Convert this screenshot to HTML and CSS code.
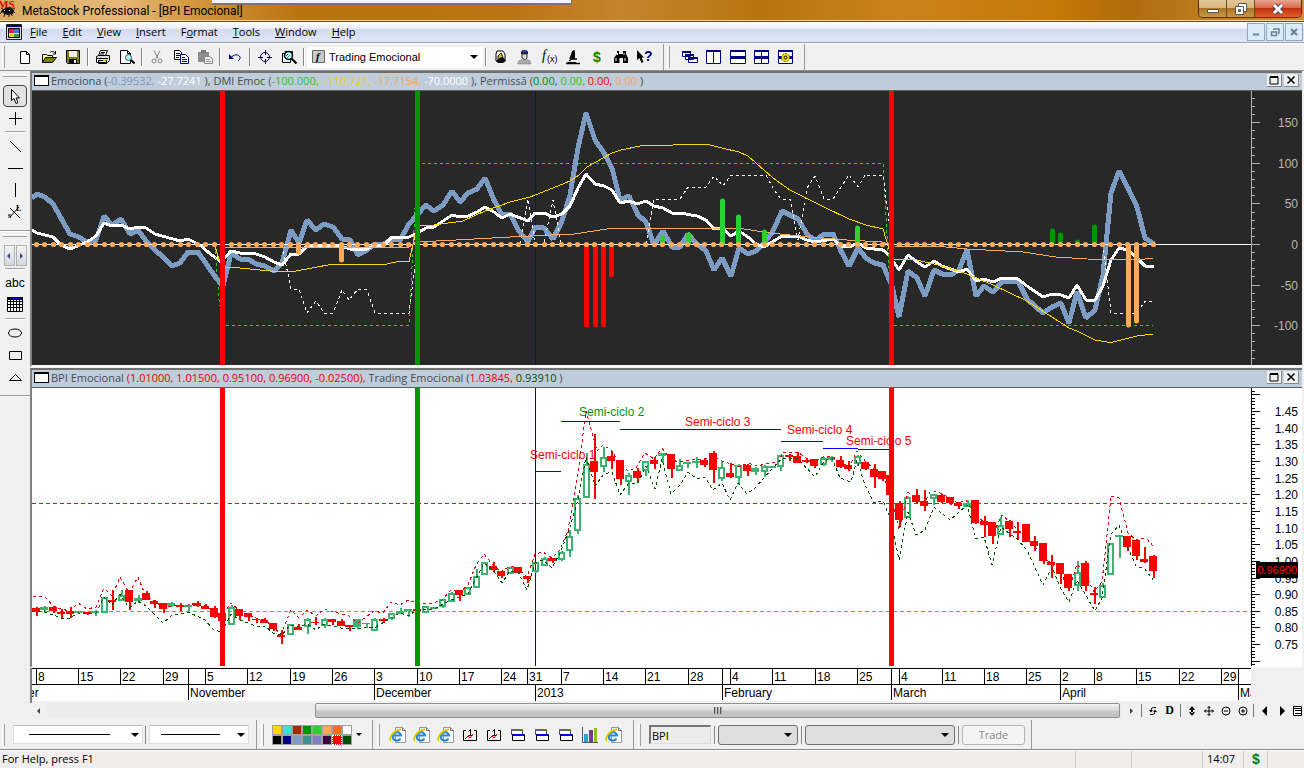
FILE: index.html
```html
<!DOCTYPE html>
<html lang="en">
<head>
  <meta charset="UTF-8">
  <meta name="viewport" content="width=device-width, initial-scale=1">
  <title>MetaStock Professional - [BPI Emocional]</title>
  <link rel="stylesheet" href="styles.css">
</head>
<body>
  <!-- shared icons -->
  <svg class="defs" aria-hidden="true">
    <symbol id="i-ie" viewBox="0 0 18 18"><path d="M6.500 1.500h7l3 3v12h-10z" fill="#fff" stroke="#999"/><path d="M13.500 1.500v3h3" fill="none" stroke="#777"/><path d="M11.500 12.500a4.200 4.200 0 1 1 .5-3H5" fill="none" stroke="#2389d8" stroke-width="2.200"/><path d="M2 15C-.5 14 3 4 12 3.500" fill="none" stroke="#e8c400" stroke-width="1.800"/></symbol>
    <symbol id="i-cal" viewBox="0 0 16 16"><path d="M4 3.500H1.500v10h13v-10H12" fill="none" stroke="#000"/><path d="M6.500 4.500l2-2v6M6.500 8.500h4" fill="none" stroke="#000"/><path d="M3 12l3-3 2 2 3-4" fill="none" stroke="#d00"/></symbol>
    <symbol id="i-stack" viewBox="0 0 16 16"><path d="M1.500 2.500h11v5h-11z" fill="#fff" stroke="#444"/><path d="M1 2h12v2H1z" fill="#666"/><path d="M2.500 7.500h12v6h-12z" fill="#fff" stroke="#000"/><path d="M3 7h11v2H3z" fill="#00f"/></symbol>
    <symbol id="i-max" viewBox="0 0 12 10"><path d="M2 2h8v7H2z" fill="none" stroke="#000"/><path d="M2 2h8" stroke="#000" stroke-width="2"/></symbol>
    <symbol id="i-x" viewBox="0 0 12 10"><path d="M2.500 1.500l7 7M9.500 1.500l-7 7" stroke="#000" stroke-width="1.500"/></symbol>
  </svg>

  <header class="titlebar">
    <svg class="app-icon" width="17" height="18"><text x="-2" y="8" class="ms">MS</text><path d="M1 11l4-3 5-1 4 3-1 4-6 1-4-2z" fill="#111"/><path d="M0 14l3-4M4 17l1-5M9 17v-4M12 16l-1-4M15 13l-3-3M1 8l3 2M15 8l-4 2" stroke="#111" fill="none"/><path d="M4 10h1v1H4zM9 10h1v1H9z" fill="#fff"/></svg>
    <h1>MetaStock Professional - [BPI Emocional]</h1>
    <div class="tab-edge"></div>
    <div class="win-buttons">
      <button aria-label="Minimize"><svg width="14" height="14"><path d="M1.500 7.500h11v3h-11z" fill="#fff" stroke="#555"/></svg></button>
      <button aria-label="Restore"><svg width="14" height="14"><path d="M4.500 1.500h8v8h-8z" fill="#fff" stroke="#555"/><path d="M1.500 4.500h8v8h-8z" fill="#fff" stroke="#555"/><path d="M4.500 7.500h2v2h-2z" fill="#b98b4a" stroke="#555"/></svg></button>
      <button class="close" aria-label="Close"><svg width="14" height="14"><path d="M3 3l8 8M11 3l-8 8" stroke="#445" stroke-width="5"/><path d="M3 3l8 8M11 3l-8 8" stroke="#fff" stroke-width="3"/></svg></button>
    </div>
  </header>

  <nav class="menubar">
    <svg class="doc-icon" width="16" height="16"><path d="M.5.5h15v15H.5z" fill="#ddd" stroke="#222"/><path d="M1 1h14v2H1z" fill="#000080"/><path d="M3 5h5v4H3z" fill="#e02050"/><path d="M8 5h5v4H8z" fill="#4070e0"/><path d="M3 10h5v3H3z" fill="#e8d020"/><path d="M8 10h5v3H8z" fill="#30a040"/><path d="M2.500 4.500h11v9h-11z" fill="none" stroke="#000"/></svg>
    <button><u>F</u>ile</button>
    <button><u>E</u>dit</button>
    <button><u>V</u>iew</button>
    <button><u>I</u>nsert</button>
    <button>F<u>o</u>rmat</button>
    <button><u>T</u>ools</button>
    <button><u>W</u>indow</button>
    <button><u>H</u>elp</button>
    <div class="mdi-buttons">
      <button aria-label="Minimize document"><svg width="12" height="12"><path d="M3 8.500h6" stroke="#6a7f95" stroke-width="2"/></svg></button>
      <button aria-label="Restore document"><svg width="12" height="12"><path d="M5 4V3h5v4H9M2.500 6h5v3.500h-5z" fill="none" stroke="#6a7f95" stroke-width="1.500"/></svg></button>
      <button aria-label="Close document"><svg width="12" height="12"><path d="M3 3l6 6M9 3L3 9" stroke="#6a7f95" stroke-width="2"/></svg></button>
    </div>
  </nav>

  <div class="toolbar">
    <span class="grip"></span>
    <button class="tool" aria-label="New"><svg width="16" height="16"><path d="M3.500 2.500h6l3 3v9h-9z" fill="#fff" stroke="#000"/><path d="M9.500 2.500v3h3" fill="none" stroke="#000"/></svg></button>
    <button class="tool" aria-label="Open"><svg width="16" height="16"><path d="M1.500 13V5.500h4l1 1h5V9" fill="#ffff80" stroke="#000"/><path d="M1.500 13.500l3-5h11l-4 5z" fill="#808000" stroke="#000"/><path d="M9 3.500c2-2 4-1 5 1M14.500 2v3H12" fill="none" stroke="#000"/></svg></button>
    <button class="tool" aria-label="Save"><svg width="16" height="16"><path d="M1.500 1.500h13v13h-12l-1-1z" fill="#808000" stroke="#000"/><path d="M4 2h8v6H4z" fill="#eee"/><path d="M4 10h8v4H4z" fill="#000"/><path d="M9 11h2v3H9z" fill="#fff"/></svg></button>
    <span class="sep"></span>
    <button class="tool" aria-label="Print"><svg width="16" height="16"><path d="M5.500 1.500h7l-2 5h-7z" fill="#fff" stroke="#000"/><path d="M1.500 7.500l2-1h11v5l-2 2h-11z" fill="#ddd" stroke="#000"/><path d="M2 9.500h11M3.500 11.500h8v3h-8zM6 3.500h4M5 5h4" fill="none" stroke="#000"/><path d="M8 11h3v1H8z" fill="#d0d000"/></svg></button>
    <button class="tool" aria-label="Print preview"><svg width="16" height="16"><path d="M1.500 1.500h7l3 3v10h-10z" fill="#fff" stroke="#000"/><path d="M8.500 1.500v3h3" fill="none" stroke="#000"/><circle cx="9.500" cy="8.500" r="3" fill="#9ff" stroke="#444"/><path d="M12 11l3.500 3.500" stroke="#000" stroke-width="2"/></svg></button>
    <span class="sep"></span>
    <button class="tool" aria-label="Cut" disabled><svg width="16" height="16"><path d="M5 1.500l4 8M11 1.500l-4 8" stroke="#888" fill="none"/><circle cx="5" cy="12" r="2" fill="none" stroke="#888"/><circle cx="11" cy="12" r="2" fill="none" stroke="#888"/></svg></button>
    <button class="tool" aria-label="Copy"><svg width="16" height="16"><path d="M1.500 1.500h5l2 2v7h-7z" fill="#fff" stroke="#000"/><path d="M3 4.500h4M3 6.500h4M3 8.500h3" stroke="#000"/><path d="M7.500 5.500h5l3 3v6h-8z" fill="#fff" stroke="#000080"/><path d="M9 8.500h3M9 10.500h5M9 12.500h5" stroke="#000080"/></svg></button>
    <button class="tool" aria-label="Paste" disabled><svg width="16" height="16"><path d="M1 3h11v10H1z" fill="#8c8c8c"/><path d="M4 1h5v3H4z" fill="#777"/><path d="M7.500 7.500h5l3 2v5h-8z" fill="#eee" stroke="#888"/><path d="M9 10.500h4M9 12.500h5" stroke="#999"/></svg></button>
    <span class="sep"></span>
    <button class="tool" aria-label="Undo"><svg width="16" height="16"><path d="M4 9c2-4 8-4 9-1 .5 2-1 3-2 4" fill="none" stroke="#000080"/><path d="M2 5v5h5z" fill="#000080"/></svg></button>
    <span class="sep"></span>
    <button class="tool" aria-label="Crosshair"><svg width="16" height="16"><circle cx="8" cy="8" r="4.500" fill="none" stroke="#000080"/><path d="M8.500 1v5M8.500 10v5M1 8.500h5M10 8.500h5" stroke="#000"/></svg></button>
    <button class="tool" aria-label="Zoom in chart"><svg width="16" height="16"><path d="M1.500 4.500h8v9h-8z" fill="#fff" stroke="#000"/><path d="M3.500 2.500h8v4" fill="none" stroke="#000"/><circle cx="7.500" cy="6.500" r="4" fill="#bff" stroke="#000" stroke-width="1.500"/><path d="M5 7l2-2M6 9l3-3" stroke="#088"/><path d="M10.500 9.500l5 5" stroke="#000" stroke-width="2"/></svg></button>
    <span class="sep"></span>
    <label class="combo">
      <svg width="14" height="14"><path d="M.5.500h12v12H.5z" fill="#c8c8c8" stroke="#666"/><text x="4" y="10" class="fn">f</text></svg>
      <select aria-label="Template"><option>Trading Emocional</option></select>
    </label>
    <span class="sep"></span>
    <button class="tool" aria-label="Expert"><svg width="16" height="16"><path d="M4 2h6l2 3v7H3V5z" fill="#fff" stroke="#000"/><path d="M5 7l3-3 2 4-2 4H5z" fill="#d8c820" stroke="#000"/><path d="M3 12l5-4 3 1 2 3-3 2H5z" fill="#111"/></svg></button>
    <button class="tool" aria-label="Expert advisor"><svg width="16" height="16"><path d="M4 3c1-3 6-3 7 0v2H4z" fill="#223"/><path d="M6 1h3v2H6z" fill="#25d"/><path d="M5 5h5v4l-2 2-3-2z" fill="#ddd" stroke="#333"/><path d="M1 15c0-4 3-5 6-4 4-1 7 0 7 4z" fill="#aaa" stroke="#777" stroke-dasharray="1 1"/></svg></button>
    <button class="tool" aria-label="Indicator builder"><svg width="18" height="18"><text x="2" y="12" class="fx">f</text><text x="7" y="14" class="fx2">(x)</text></svg></button>
    <button class="tool" aria-label="Explorer"><svg width="16" height="16"><path d="M9 1v8M8 2l-3 8M1 14.500h14M4 12l3-2h5" stroke="#000" stroke-width="1.500" fill="none"/><path d="M7 3h3v7H6zM2 13h9v2H2z" fill="#000"/></svg></button>
    <button class="tool money" aria-label="System tester">$</button>
    <button class="tool" aria-label="Find security"><svg width="16" height="16"><path d="M4 2h2v3h4V2h3v3l2 4v5h-5V9H6.500v5H1V9l3-4z" fill="#000"/><path d="M3 9v3M12 9v3M4.500 4v2M11 4v2" stroke="#fff"/></svg></button>
    <button class="tool" aria-label="Context help"><svg width="18" height="18"><path d="M1 2v10l2.500-2 2 5 2-1-2-4.500H8z" fill="#000"/><text x="8" y="13" class="help">?</text></svg></button>
    <div class="group">
      <span class="grip"></span>
      <button class="tool" aria-label="Cascade"><svg width="16" height="16"><path d="M.5 2.500h8v5h-8zM3.500 5.500h8v5h-8zM6.500 8.500h9v5h-9z" fill="#fff" stroke="#000080"/><path d="M0 2h9v2H0zM3 5h9v2H3zM6 8h10v2H6z" fill="#000080"/></svg></button>
      <button class="tool" aria-label="Tile columns"><svg width="16" height="16"><path d="M.5 1.500h14v13H.500zM7.500 1v14" fill="#fff" stroke="#000080"/><path d="M0 1h15v2H0z" fill="#000080"/></svg></button>
      <button class="tool" aria-label="Tile rows"><svg width="16" height="16"><path d="M.5 1.500h15v13H.5z" fill="#fff" stroke="#000080"/><path d="M0 1h16v2H0zM0 7h16v3H0z" fill="#000080"/></svg></button>
      <button class="tool" aria-label="Tile grid"><svg width="16" height="16"><path d="M.5 1.500h14v13H.500zM7.500 1v14" fill="#fff" stroke="#000080"/><path d="M0 1h15v2H0zM0 7h15v3H0z" fill="#000080"/></svg></button>
      <button class="tool" aria-label="Layout options"><svg width="16" height="16"><path d="M.5 1.500h14v13H.500z" fill="#fff" stroke="#000080"/><path d="M0 1h15v2H0zM0 7h15v3H0z" fill="#000080"/><circle cx="7.500" cy="8.500" r="4" fill="#ffe600" stroke="#554400" stroke-dasharray="2 1"/><circle cx="7.500" cy="8.500" r="1.500" fill="none" stroke="#000"/></svg></button>
    </div>
  </div>

  <main class="workspace">
    <aside class="palette">
      <div class="palette-group">
        <span class="hgrip"></span>
        <button class="draw active" aria-label="Pointer"><svg width="14" height="18"><path d="M3.500 2.500v11l2.500-2 2 5 2-1-2-4.500h3.500z" fill="#fff" stroke="#000"/></svg></button>
        <button class="draw" aria-label="Cross"><svg width="14" height="14"><path d="M7.500 1v13M1 7.500h13" stroke="#000"/></svg></button>
        <span class="hsep"></span>
        <button class="draw" aria-label="Trendline"><svg width="14" height="14"><path d="M2 2l11 11" stroke="#000"/></svg></button>
        <button class="draw" aria-label="Horizontal line"><svg width="16" height="14"><path d="M1 7.500h15" stroke="#000"/></svg></button>
        <button class="draw" aria-label="Vertical line"><svg width="14" height="14"><path d="M7.500 0v14" stroke="#000"/></svg></button>
        <button class="draw" aria-label="Speed lines"><svg width="16" height="16"><path d="M3 4l10 10M3 13L12 3" stroke="#000"/><text x="1" y="14" class="sl">s</text><text x="9" y="7" class="sl">L</text></svg></button>
      </div>
      <div class="palette-group second">
        <span class="hgrip"></span>
        <div class="nav-pair"><button aria-label="Previous"><svg width="8" height="8"><path d="M5 1v6L2 4z" fill="#2b4a9b"/></svg></button><button aria-label="Next"><svg width="8" height="8"><path d="M3 1v6l3-3z" fill="#2b4a9b"/></svg></button></div>
        <span class="hsep"></span>
        <button class="draw abc">abc</button>
        <button class="draw" aria-label="Grid"><svg width="16" height="16"><path d="M.5 1.500h15v13H.5zM0 4.500h16M0 7.500h16M0 10.500h16M3.500 3v12M6.500 3v12M9.500 3v12M12.500 3v12" fill="#fff" stroke="#000"/><path d="M0 0h16v3H0z" fill="#000"/><path d="M4 1h11v1H4z" fill="#00b"/></svg></button>
        <span class="hsep"></span>
        <button class="draw" aria-label="Ellipse"><svg width="14" height="14"><ellipse cx="7" cy="7" rx="6.500" ry="4" fill="none" stroke="#000"/></svg></button>
        <button class="draw" aria-label="Rectangle"><svg width="14" height="14"><path d="M1.500 3.500h12v8h-12z" fill="none" stroke="#000"/></svg></button>
        <button class="draw" aria-label="Triangle"><svg width="14" height="14"><path d="M1.500 10.500h12l-6-6z" fill="none" stroke="#000"/></svg></button>
      </div>
    </aside>

    <section class="charts">
      <article class="pane pane-osc">
        <header class="caption">
          <span class="win-glyph"></span>
          <p>Emociona (<b class="c-blue">-0.39532,</b> <b class="c-white">-27.7241</b> ), DMI Emoc (<b class="c-lime">-100.000,</b>&nbsp; <b class="c-gold">-110.721,</b> <b class="c-orange">-17.7154,</b> <b class="c-white">-70.0000</b> ), Permissã (<b class="c-green">0.00,</b> <b class="c-lime">0.00,</b> <b class="c-red">0.00,</b> <b class="c-orange">0.00</b> )</p>
          <button aria-label="Maximize pane"><svg width="12" height="10"><use href="#i-max"/></svg></button>
          <button aria-label="Close pane"><svg width="12" height="10"><use href="#i-x"/></svg></button>
        </header>
        <div class="plot-row dark">
          <svg class="plot"><g id="osc" transform="translate(-32 -91)"></g></svg>
          <svg class="scale"><g id="osc-scale" transform="translate(-1251 -91)"></g></svg>
        </div>
      </article>

      <article class="pane pane-price">
        <header class="caption">
          <span class="win-glyph"></span>
          <p>BPI Emocional <b class="c-red">(1.01000, 1.01500, 0.95100, 0.96900, -0.02500)</b>, Trading Emocional (<b class="c-red">1.03845,</b> <b class="c-dark">0.93910</b> )</p>
          <button aria-label="Maximize pane"><svg width="12" height="10"><use href="#i-max"/></svg></button>
          <button aria-label="Close pane"><svg width="12" height="10"><use href="#i-x"/></svg></button>
        </header>
        <div class="plot-row">
          <svg class="plot"><g id="price" transform="translate(-32 -388)"></g></svg>
          <svg class="scale"><g id="price-scale" transform="translate(-1251 -388)"></g></svg>
        </div>
      </article>

      <div class="time-row"><svg class="time-axis"><g id="time" transform="translate(-32 -668)"></g></svg></div>

      <div class="scroll-row">
        <button class="arrow" aria-label="Scroll left"><svg width="8" height="8"><path d="M5 1v6L2 4z" fill="#444"/></svg></button>
        <div class="track"><div class="thumb"><i></i><i></i><i></i></div></div>
        <button class="arrow" aria-label="Scroll right"><svg width="8" height="8"><path d="M3 1v6l3-3z" fill="#444"/></svg></button>
        <span class="vsep"></span>
        <button class="mini" aria-label="Refresh"><svg width="10" height="12"><path d="M8 2.500H5.500Q3 2.500 3 5.500M2 9.500h2.500Q7 9.500 7 6.500" fill="none" stroke="#000"/><path d="M1 5h4L3 7.500zM5 7h4L7 4.500z"/></svg></button>
        <button class="mini periodicity">D</button>
        <span class="vsep"></span>
        <button class="mini" aria-label="Scale vertically"><svg width="10" height="12"><path d="M5 1l3 4H2zM5 11l3-4H2zM4 4h2v4H4z"/></svg></button>
        <button class="mini" aria-label="Move"><svg width="10" height="12"><path d="M5 1.500v9M.5 6h9M3.500 3L5 1.500 6.500 3M3.500 9L5 10.500 6.500 9M2 4.500L.5 6 2 7.500M8 4.500L9.500 6 8 7.500" fill="none" stroke="#000"/></svg></button>
        <button class="mini" aria-label="Zoom out"><svg width="10" height="12"><circle cx="5" cy="6" r="4" fill="none" stroke="#000"/><path d="M3 6h4" stroke="#000"/></svg></button>
        <button class="mini" aria-label="Zoom in"><svg width="10" height="12"><circle cx="5" cy="6" r="4" fill="none" stroke="#000"/><path d="M3 6h4M5 4v4" stroke="#000"/></svg></button>
        <span class="vsep"></span>
        <button class="mini" aria-label="Previous chart"><svg width="10" height="12"><path d="M7 1v10L2 6z"/></svg></button>
        <button class="mini" aria-label="Next chart"><svg width="10" height="12"><path d="M3 1v10l5-5z"/></svg></button>
        <button class="mini last" aria-label="Chart list"><svg width="10" height="12"><path d="M1.500 1.500h8v9h-8zM1 3.500h9M3 5.500h6M3 8.500h6" fill="#fff" stroke="#000"/></svg></button>
      </div>
    </section>
  </main>

  <footer class="bottombar">
    <span class="grip"></span>
    <select class="line-combo style" aria-label="Line style"><option></option></select>
    <span class="bsep"></span>
    <select class="line-combo weight" aria-label="Line weight"><option></option></select>
    <div class="group swatch-group">
      <span class="grip"></span>
      <div class="swatches" id="swatches"></div>
      <button class="drop" aria-label="More colours"><svg width="8" height="6"><path d="M1 1h6L4 4z"/></svg></button>
    </div>
    <div class="group links">
      <span class="grip"></span>
      <button class="tool" aria-label="Web page 1"><svg width="18" height="18"><use href="#i-ie"/></svg></button>
      <button class="tool" aria-label="Web page 2"><svg width="18" height="18"><use href="#i-ie"/></svg></button>
      <button class="tool" aria-label="Web page 3"><svg width="18" height="18"><use href="#i-ie"/></svg></button>
      <button class="tool" aria-label="Chart 1"><svg width="16" height="16"><use href="#i-cal"/></svg></button>
      <button class="tool" aria-label="Chart 2"><svg width="16" height="16"><use href="#i-cal"/></svg></button>
      <button class="tool" aria-label="Layout 1"><svg width="16" height="16"><use href="#i-stack"/></svg></button>
      <button class="tool" aria-label="Layout 2"><svg width="16" height="16"><use href="#i-stack"/></svg></button>
      <button class="tool" aria-label="Layout 3"><svg width="16" height="16"><use href="#i-stack"/></svg></button>
      <button class="tool" aria-label="Statistics"><svg width="18" height="18"><path d="M1.500 1v15.500H17" fill="none" stroke="#555"/><path d="M3 8h4v8H3z" fill="#2aa0e0"/><path d="M8 4h4v12H8z" fill="#704090"/><path d="M13 2h3v14h-3z" fill="#90c020"/></svg></button>
      <button class="tool" aria-label="Web page 4"><svg width="18" height="18"><use href="#i-ie"/></svg></button>
    </div>
    <div class="group trade">
      <span class="grip"></span>
      <input type="text" value="BPI" aria-label="Symbol">
      <span class="bsep"></span>
      <select class="flat short" aria-label="Account"><option></option></select>
      <span class="bsep"></span>
      <select class="flat long" aria-label="Order type"><option></option></select>
      <span class="bsep"></span>
      <button class="trade-btn" disabled>Trade</button>
    </div>
  </footer>

  <div class="statusbar">
    <span class="hint">For Help, press F1</span>
    <span class="cell w56"></span>
    <span class="cell w71"></span>
    <span class="cell w41">14:07</span>
    <span class="cell w24 money">$</span>
    <span class="cell w37"></span>
  </div>
  <script src="chart.js"></script>
</body>
</html>
```
FILE: styles.css
```css
* {
  box-sizing: border-box;
}

body {
  margin: 0;
  height: 100vh;
  display: flex;
  flex-direction: column;
  overflow: hidden;
  background: #f0f0f0;
  color: #000;
  font-family: "Open Sans", "Noto Sans", sans-serif;
  font-size: 11px;
  line-height: 16px;
}

button,
select,
input {
  font: inherit;
  color: inherit;
  margin: 0;
  padding: 0;
  border: 0;
  background: none;
  border-radius: 0;
}

button {
  display: flex;
  align-items: center;
  justify-content: center;
}

svg {
  display: block;
  flex: none;
}

.defs {
  position: absolute;
  width: 0;
  height: 0;
}

/* title bar */
.titlebar {
  position: relative;
  flex: none;
  display: flex;
  height: 22px;
  border-bottom: 1px solid #6b4a1c;
  background: linear-gradient(90deg, #d9ac62 0, #e6b878 120px, #cf8f35 210px, #b8740f 300px, #bb7514 520px, #c5842c 620px, #b8740f 760px, #c9821c 900px, #c47806 1060px, #b06c0c 1130px, #d09038 1304px);
  box-shadow: inset 0 -1px #f3d39b;
}

.titlebar h1 {
  margin: 3px 0 0 5px;
  font-family: Roboto, sans-serif;
  font-size: 12px;
  font-weight: 400;
}

.app-icon {
  overflow: visible;
}

.ms {
  font: bold 11px "Liberation Serif", serif;
  fill: #d00;
}

.tab-edge {
  position: absolute;
  left: 212px;
  top: 0;
  width: 360px;
  height: 5px;
  background: #f4f4f4;
  border: solid #777;
  border-width: 0 1px 2px 0;
}

.win-buttons {
  display: flex;
  height: 18px;
  margin: 0 2px 0 auto;
  border: 1px solid #4a3210;
  border-top: 0;
  border-radius: 0 0 5px 5px;
  overflow: hidden;
}

.win-buttons button {
  width: 28px;
  background: linear-gradient(#e3c79a, #d9b67c 45%, #ad7526 50%, #c99748);
  border-right: 1px solid #6b4a1c;
}

.win-buttons .close {
  width: 46px;
  border: 0;
  background: linear-gradient(#e8a590, #d9694c 45%, #c02f10 50%, #e0602c);
}

/* menu bar */
.menubar {
  flex: none;
  display: flex;
  align-items: center;
  gap: 1px;
  height: 21px;
  padding-left: 6px;
  background: linear-gradient(#fff, #eceffa 32%, #d5dbef 36%, #e1e6f6);
  border-bottom: 1px solid #a0a0a8;
}

.menubar > button {
  padding: 0 7px;
}

.mdi-buttons {
  display: flex;
  gap: 1px;
  margin: 0 1px 0 auto;
}

.mdi-buttons button {
  width: 18px;
  height: 18px;
  background: #dcebf8;
  border: 1px solid #90a4ba;
}

/* toolbars */
.toolbar {
  flex: none;
  display: flex;
  align-items: center;
  height: 28px;
  background: #f0f0f0;
  border-top: 1px solid #fff;
  border-bottom: 1px solid #909090;
}

.grip {
  width: 3px;
  height: 22px;
  margin: 0 8px 0 2px;
  flex: none;
  border-left: 1px solid #fff;
  border-right: 1px solid #a0a0a0;
}

.tool {
  width: 24px;
  height: 24px;
  flex: none;
}

.sep {
  width: 6px;
  height: 18px;
  flex: none;
  background: linear-gradient(90deg, transparent 2px, #888 2px, #888 3px, #fff 3px, #fff 4px, transparent 4px);
}

.combo {
  display: flex;
  align-items: center;
  width: 176px;
  height: 21px;
  padding-left: 5px;
  background: #fff;
}

.combo select,
.line-combo,
.flat {
  appearance: none;
  background: url("data:image/svg+xml,%3Csvg xmlns='http://www.w3.org/2000/svg' width='8' height='4'%3E%3Cpath d='M0 0h8L4 4z'/%3E%3C/svg%3E") right 5px center no-repeat;
}

.combo select {
  flex: 1;
  padding-left: 3px;
  height: 20px;
  font: 11px "Liberation Sans", Arial, sans-serif;
}

.group {
  display: flex;
  align-items: center;
  height: 100%;
  margin-left: 6px;
  padding-right: 6px;
  border-left: 1px solid #999;
  border-right: 1px solid #999;
}

.toolbar .group .grip {
  margin: 0 8px 0 3px;
}

.money {
  color: #008000;
  font: bold 14px "Liberation Sans", sans-serif;
}

.fn {
  font: italic bold 11px "Liberation Serif", serif;
}

.fx {
  font: italic 14px "Liberation Serif", serif;
}

.fx2 {
  font: 9px "Liberation Sans", sans-serif;
}

.help {
  font: bold 14px "Liberation Sans", sans-serif;
  fill: #000080;
}

/* drawing palette */
.workspace {
  flex: 1;
  min-height: 0;
  display: flex;
}

.palette {
  width: 30px;
  flex: none;
}

.palette-group {
  display: flex;
  flex-direction: column;
  align-items: center;
  padding-bottom: 7px;
  border-bottom: 1px solid #999;
  box-shadow: 0 1px #fff;
}

.hgrip {
  width: 24px;
  height: 3px;
  margin: 3px 0 8px;
  border-top: 1px solid #fff;
  border-bottom: 1px solid #a0a0a0;
}

.hsep {
  width: 20px;
  height: 2px;
  margin: 2px 0;
  background: #a0a0a0;
  border-bottom: 1px solid #fff;
}

.draw {
  width: 26px;
  height: 22px;
}

.draw.active {
  width: 24px;
  border: 1px solid #444;
  border-radius: 4px;
  background: #e2e2e2;
}

.draw.abc {
  font: 12px "Liberation Sans", Arial, sans-serif;
}

.sl {
  font: bold 8px "Liberation Serif", serif;
}

.nav-pair {
  display: flex;
  gap: 1px;
}

.nav-pair button {
  width: 11px;
  height: 21px;
  border: 1px solid #b0b0b0;
  background: linear-gradient(#f4f4f4, #d8d8d8);
}

/* chart panes */
.charts {
  flex: 1;
  min-width: 0;
  display: flex;
  flex-direction: column;
}

.pane {
  display: flex;
  flex-direction: column;
  min-height: 0;
  margin-right: 2px;
  border-top: 2px solid #707070;
  border-left: 2px solid #808080;
  border-bottom: 2px solid #fafafa;
}

.pane-osc {
  flex: 296 1 0;
}

.pane-price {
  flex: 300 1 0;
  margin-top: 1px;
}

.caption {
  flex: none;
  display: flex;
  align-items: center;
  height: 18px;
  padding: 0 3px 2px 2px;
  background: #bfccd9;
  border-bottom: 1px solid #606060;
  color: #444c55;
}

.caption p {
  flex: 1;
  margin: 0;
  overflow: hidden;
  white-space: nowrap;
}

.caption b {
  font-weight: 400;
}

.caption button {
  width: 15px;
  height: 13px;
  margin-left: 2px;
  background: #f0f0f0;
  border: solid #888;
  border-width: 0 1px 1px 0;
}

.win-glyph {
  width: 15px;
  height: 11px;
  margin-right: 2px;
  background: #fff;
  border: 1px solid #000;
  border-top-width: 2px;
}

.c-blue { color: #7b9cc4; }
.c-white { color: #fff; }
.c-lime { color: #2fc22f; }
.c-gold { color: #f2cf10; }
.c-orange { color: #fba65a; }
.c-green { color: #009000; }
.c-red { color: #f00000; }
.c-dark { color: #005000; }

.plot-row {
  flex: 1;
  min-height: 0;
  display: flex;
  background: #fff;
}

.plot-row.dark {
  background: #282828;
}

.plot {
  flex: 1;
  min-width: 0;
  height: 100%;
}

.scale {
  width: 51px;
  height: 100%;
}

.plot-row text,
.time-axis text {
  font: 12px "Liberation Sans", Arial, sans-serif;
}

.scale text {
  text-anchor: end;
}

.dark .scale text {
  fill: #b8b8b8;
}

.scale .last-price {
  fill: #f00;
  font-size: 11px;
}

.series {
  fill: none;
  stroke-linejoin: bevel;
}

.time-row {
  flex: none;
  height: 35px;
  padding-right: 53px;
  border-left: 2px solid #808080;
}

.time-axis {
  width: 100%;
  height: 33px;
  background: #fff;
}

/* scrollbar */
.scroll-row {
  flex: none;
  display: flex;
  align-items: center;
  height: 17px;
  padding-bottom: 2px;
  overflow: hidden;
}

.arrow {
  width: 17px;
  height: 15px;
  flex: none;
}

.track {
  flex: 1;
  height: 15px;
  display: flex;
  padding-right: 2px;
  background: #ececec;
}

.thumb {
  flex: none;
  width: 75%;
  margin-left: auto;
  display: flex;
  align-items: center;
  justify-content: center;
  gap: 1px;
  border: 1px solid #909090;
  border-radius: 2px;
  background: linear-gradient(#f2f2f2, #dcdcdc 45%, #c6c6ca 55%, #c2c2c4);
}

.thumb i {
  width: 2px;
  height: 7px;
  border-left: 1px solid #555;
  border-right: 1px solid #aaa;
}

.vsep {
  width: 1px;
  height: 13px;
  margin: 0 2px;
  flex: none;
  background: #777;
}

.mini {
  width: 17px;
  height: 15px;
  flex: none;
}

.mini.last {
  width: 14px;
}

.periodicity {
  font: bold 12px "Liberation Serif", serif;
}

/* bottom toolbar */
.bottombar {
  flex: none;
  display: flex;
  align-items: center;
  height: 30px;
  border-bottom: 1px solid #888;
}

.line-combo {
  height: 19px;
  background-color: #fff;
  border: 1px solid #e0e0e0;
  border-top-color: #bbb;
  background-image: url("data:image/svg+xml,%3Csvg xmlns='http://www.w3.org/2000/svg' width='8' height='4'%3E%3Cpath d='M0 0h8L4 4z'/%3E%3C/svg%3E"), linear-gradient(#000, #000);
  background-repeat: no-repeat;
}

.line-combo.style {
  width: 130px;
  background-position: right 3px center, 15px center;
  background-size: 8px 4px, 81px 1px;
}

.line-combo.weight {
  width: 100px;
  background-position: right 3px center, 11px center;
  background-size: 8px 4px, 59px 1px;
}

.bsep {
  width: 1px;
  height: 18px;
  margin: 0 3px 0 2px;
  flex: none;
  background: #888;
}

.bottombar .group {
  border-left: 0;
}

.bottombar .group .grip {
  margin: 0 6px 0 0;
}

.bottombar .swatch-group {
  width: 117px;
  margin-left: 7px;
  border-left: 1px solid #999;
}

.bottombar .swatch-group .grip {
  margin: 0 8px 0 4px;
}

.swatches {
  display: grid;
  grid-template-columns: repeat(8, 10px);
  grid-auto-rows: 10px;
}

.swatches button {
  border: 1px solid #a0a0a0;
}

.swatches .picked {
  border: 1px dotted #fff;
}

.drop {
  width: 14px;
  height: 18px;
}

.links {
  width: 257px;
}

.bottombar .links,
.bottombar .trade {
  margin-left: 4px;
}

.bottombar .trade .grip {
  margin-right: 8px;
}

.trade input {
  width: 62px;
  height: 19px;
  padding-left: 1px;
  border: solid #777;
  border-width: 2px 1px 1px 2px;
  border-right-color: #ddd;
  border-bottom-color: #ddd;
  background: #ececec;
}

.trade .bsep {
  margin-left: 3px;
}

.flat {
  height: 20px;
  border: 1px solid #707070;
  border-radius: 3px;
  background-color: #dedede;
}

.short {
  width: 80px;
}

.long {
  width: 150px;
}

.trade-btn {
  width: 63px;
  height: 20px;
  border: 1px solid #b4b4b4;
  border-radius: 3px;
  background: #f4f4f4;
  color: #888;
}

/* status bar */
.statusbar {
  flex: none;
  display: flex;
  height: 18px;
  background: #f1eded;
  border-top: 1px solid #fff;
}

.hint {
  flex: 1;
  padding-left: 2px;
}

.cell {
  padding-left: 4px;
  border-left: 1px solid #d0cccc;
}

.statusbar .money {
  padding-left: 8px;
}

.w56 { width: 56px; }
.w71 { width: 71px; }
.w41 { width: 41px; }
.w24 { width: 24px; }
.w37 { width: 37px; }
```
FILE: chart.js
```js
const NS = 'http://www.w3.org/2000/svg';

function add(parent, tag, attrs, text) {
  const el = document.createElementNS(NS, tag);
  for (const key in attrs) el.setAttribute(key, attrs[key]);
  if (text !== undefined) el.textContent = text;
  parent.appendChild(el);
  return el;
}

function line(parent, points, color, width, dash) {
  const attrs = { points: points, stroke: color, 'stroke-width': width, class: 'series' };
  if (dash) attrs['stroke-dasharray'] = dash;
  attrs['shape-rendering'] = 'crispEdges';
  return add(parent, 'polyline', attrs);
}

function rect(parent, x, y, w, h, fill) {
  return add(parent, 'rect', { x: x, y: y, width: w, height: h, fill: fill, 'shape-rendering': 'crispEdges' });
}

const barX = i => Math.round(36 + 8.46 * i);

// vertical markers shared by both panes
function markers(g, top, height) {
  rect(g, 220, top, 5, height, '#ff0000');
  rect(g, 415, top, 5, height, '#009600');
  rect(g, 889, top, 5, height, '#ff0000');
}

/* ---------- oscillator pane ---------- */
const osc = document.getElementById('osc');
rect(osc, 535, 91, 1, 1000, '#0000d0');

const blue = '32,198 37,194 45,197 53,204 70,234 79,237 87,242 96,240 104,216 112,225 121,219 130,234 138,230 146,241 172,266 180,263 188,252 198,252 216,278 223,286 231,253 240,259 248,259 256,264 265,266 274,271 282,263 291,230 299,243 307,220 316,230 324,224 333,227 342,239 350,240 358,255 367,250 375,244 384,244 392,239 400,240 409,224 417,215 426,205 434,211 443,205 452,191 460,202 468,193 477,189 485,178 494,200 502,215 510,214 519,231 528,242 535,227 544,228 553,239 562,221 570,195 578,148 586,113 595,140 604,153 612,168 620,200 629,196 638,215 646,222 654,245 663,231 672,247 680,247 688,234 697,244 706,251 714,270 722,258 731,276 739,248 748,254 756,251 764,243 773,231 782,211 790,215 798,219 807,234 815,241 824,234 833,234 841,251 849,266 858,248 866,258 874,263 883,265 892,286 899,317 908,271 917,278 925,296 934,270 942,274 951,275 959,270 967,250 976,296 984,286 993,292 1002,282 1010,281 1018,281 1027,299 1043,313 1052,307 1061,303 1069,323 1077,292 1086,318 1095,310 1103,275 1111,193 1119,171 1128,188 1137,207 1145,238 1154,244';
line(osc, blue, '#7c9cc4', 5);

line(osc, '32,244.500 1251,244.500', '#ffffff', 1);
line(osc, '32,230 37,233 53,237 61,245 70,249 87,242 96,236 104,223 112,226 121,225 130,229 138,227 146,228 155,234 180,241 188,239 200,245 208,252 221,262 231,251 240,253 256,254 265,257 274,262 282,265 291,254 299,254 307,246 316,247 324,245 337,245 350,249 358,250 367,249 375,245 384,245 392,237 409,237 417,233 426,228 434,227 452,215 460,217 468,216 477,212 485,207 494,212 502,218 510,214 528,221 535,213 544,213 553,217 562,214 570,206 578,188 586,174 595,184 604,186 612,190 620,203 629,201 637,204 646,201 654,206 663,208 672,213 680,213 697,216 706,220 714,229 722,228 731,236 739,231 748,237 756,244 764,247 782,236 798,236 807,240 815,242 833,239 841,246 849,247 858,243 866,248 883,250 889,255 899,270 908,255 917,262 925,267 934,261 942,266 959,272 967,269 976,281 984,279 993,282 1002,278 1018,279 1027,286 1043,297 1052,294 1061,295 1069,298 1077,285 1086,300 1095,300 1103,286 1111,260 1119,248 1128,250 1137,258 1145,266 1154,266', '#ffffff', 3);

line(osc, '215,245 219,300 223,325.500 409,325.500 415,208 419,163.500 883,163.500 890,285 894,325.500 1153,325.500', '#32cd32', 1, '3 3');
line(osc, '282,245 291,289 299,289 307,313 316,301 324,313 333,313 342,290 349,300 358,289 367,290 375,313 409,313 415,265 417,244', '#ffffff', 1, '3 3');
line(osc, '520,244 528,199 535,244 544,244 553,200 561,244', '#ffffff', 1, '3 3');
line(osc, '646,244 654,199 680,199 688,187 706,187 714,176 723,186 731,175 766,175 774,190 781,199 790,199 798,240 807,188 815,176 824,199 833,199 849,175 858,187 865,175 883,175 892,244', '#ffffff', 1, '3 3');
line(osc, '1103,244 1111,313 1137,313 1145,301 1153,301', '#ffffff', 1, '3 3');

line(osc, '215,246 219,260 225,267 240,268 270,271 290,272 307,269 333,264 387,264 400,261 409,262 417,226 434,225 463,221 485,211 510,202 530,197 553,188 570,181 579,175 587,167 612,153 621,150 645,145 673,145 680,144 706,144 722,148 739,152 748,156 756,163 773,178 790,190 824,207 849,219 866,225 883,229 889,249 894,259 917,260 942,266 967,274 993,285 1027,301 1052,317 1069,328 1077,331 1095,340 1107,342 1113,342 1137,336 1153,334', '#ffd700', 1);
line(osc, '222,248 409,247 416,242 456,240 510,237 550,235 574,234 607,229 634,228 714,228 744,229 770,233 810,237 847,240 882,242 894,246 946,247 967,249 1023,252 1056,257 1103,260 1120,259 1145,259 1153,258', '#ffaa5a', 1);

function thick(x, y1, y2, color) {
  add(osc, 'line', { x1: x, x2: x, y1: y1, y2: y2, stroke: color, 'stroke-width': 5, 'stroke-linecap': 'round' });
}
[[298.5, 252], [341.5, 260], [1128.5, 325], [1136.5, 321]].forEach(b => thick(b[0], 246, b[1], '#ffaa5a'));
[[586.5, 325], [595.5, 325], [603.5, 325], [611.5, 275]].forEach(b => thick(b[0], 246, b[1], '#ff0000'));
[[662.5, 238], [688.5, 235], [722.5, 201], [738.5, 217], [764.5, 232], [857.5, 228]].forEach(b => thick(b[0], 243, b[1], '#32cd32'));
[[1052.5, 231], [1060.5, 235], [1077.5, 242], [1094.5, 227]].forEach(b => thick(b[0], 243, b[1], '#009600'));
for (let i = 0; i < 133; i++) {
  add(osc, 'circle', { cx: barX(i) + 0.5, cy: 244.5, r: 2.6, fill: '#ffaa5a' });
}
markers(osc, 91, 1000);

const oscScale = document.getElementById('osc-scale');
rect(oscScale, 1251, 91, 1, 1000, '#b0b0b0');
for (let v = -140; v <= 180; v += 10) {
  const y = Math.round(244 - v * 0.812);
  const major = v % 50 === 0;
  rect(oscScale, 1252, y, major ? 8 : 3, 1, '#b0b0b0');
  if (major) add(oscScale, 'text', { x: 1298, y: y + 5 }, v);
}

/* ---------- price pane ---------- */
const price = document.getElementById('price');
const lime = '#32cd32';
line(price, '32,503.500 1251,503.500', '#ff0000', 1, '4 3');
line(price, '32,611.500 1251,611.500', lime, 1, '4 3');
rect(price, 535, 388, 1, 1000, '#0000d0');

// r = down, g = filled up, h = hollow up: [type, body top, body bottom, high, low]
const candles = `r 608 611 607 616|g 607 610 606 613|r 607 611 607 613|r 612 614 609 619|r 611 614 607 618|g 611 613 611 613|r 612 614 612 615|g 611 613 610 616|h 598 612 597 612|r 600 602 590 610|h 596 600 590 600|r 590 602 590 610|g 598 601 595 603|r 593 600 591 600|r 601 604 600 608|r 603 609 603 613|g 603 606 602 607|r 605 607 603 611|g 605 607 604 612|r 603 606 601 607|r 606 609 604 609|r 608 617 606 618|r 613 621 613 621|h 608 624 605 624|r 609 616 609 620|r 613 617 613 621|r 619 620 619 623|r 620 623 618 623|r 623 629 623 631|r 635 637 630 644|h 625 634 625 634|r 627 630 624 630|h 620 626 618 634|r 622 623 617 625|h 620 625 618 628|r 619 622 619 625|r 621 626 619 626|r 625 627 625 631|g 619 627 619 629|g 623 624 623 628|h 620 630 618 630|r 619 621 618 623|h 614 618 613 620|g 611 614 608 614|g 609 611 609 617|r 609 611 608 611|h 607 612 606 612|g 607 609 607 609|h 600 606 599 608|h 594 601 592 601|r 590 595 590 601|h 588 594 587 594|h 577 587 569 587|h 563 574 563 575|r 566 570 562 572|r 571 576 571 578|h 568 573 568 573|r 567 573 567 574|r 576 579 576 583|h 563 571 563 573|h 559 565 557 565|r 558 561 558 563|h 553 559 551 561|h 537 550 530 557|h 499 530 495 534|h 465 497 453 497|r 461 472 434 499|h 458 466 447 472|r 456 461 451 469|r 460 479 460 485|h 476 481 473 495|r 471 478 468 483|h 462 470 461 476|r 460 464 457 469|g 453 456 453 463|r 454 469 454 478|h 466 470 459 471|g 462 464 462 468|g 461 463 457 468|r 460 465 458 467|r 453 470 451 483|h 468 478 461 481|r 473 477 463 478|h 466 477 464 485|r 465 471 464 476|g 468 472 467 475|h 467 471 465 477|g 466 468 466 468|h 456 466 456 471|r 455 457 454 461|r 456 463 452 463|r 460 462 458 463|r 459 466 459 468|h 459 464 457 466|g 457 460 456 462|r 460 467 456 468|r 465 469 461 471|h 457 463 455 466|r 462 469 462 470|r 469 477 464 488|r 471 479 471 481|r 475 495 475 495|r 503 520 501 527|h 498 517 496 517|r 495 502 489 503|r 501 506 490 511|h 495 498 494 505|r 495 502 494 503|r 497 503 497 505|r 503 506 502 509|g 503 507 500 507|r 500 523 500 524|r 521 525 516 537|r 522 536 522 544|h 526 534 517 534|r 521 529 520 537|r 531 533 522 540|r 524 542 524 542|r 541 546 536 551|r 543 561 543 564|r 562 565 555 578|r 563 574 563 584|r 574 588 574 591|h 573 585 561 591|r 563 586 561 591|r 593 595 587 604|h 586 597 583 597|h 544 574 544 574|g 535 537 535 558|r 536 547 536 551|r 540 556 540 560|r 559 562 547 563|r 556 571 555 578`.split('|');

candles.forEach((row, i) => {
  const [type, ...n] = row.split(' ');
  const [top, bottom, high, low] = n.map(Number);
  const x = barX(i);
  const color = type === 'r' ? '#ff0000' : '#3cb371';
  if (type === 'h') {
    rect(price, x, high, 2, top - high, color);
    rect(price, x, bottom, 2, low - bottom, color);
    add(price, 'rect', { x: x - 2, y: top, width: 5, height: bottom - top, fill: 'none', stroke: color, 'stroke-width': 2, 'shape-rendering': 'crispEdges' });
  } else {
    rect(price, x, high, 2, low - high, color);
    rect(price, x - 4, top, 8, bottom - top, color);
  }
});

line(price, '33,596 45,597 53,606 61,609 70,611 78,603 87,609 96,607 104,588 112,596 120,577 129,593 138,577 146,597 155,601 163,608 171,606 188,605 197,603 206,606 222,616 231,603 240,611 248,614 256,618 265,620 273,627 281,634 291,610 299,618 307,610 316,616 324,609 341,614 349,616 358,623 366,617 374,611 383,613 391,602 400,605 408,600 417,603 430,604 442,600 452,589 459,593 468,585 476,565 484,554 493,565 501,572 510,566 518,568 527,577 535,554 543,552 552,558 560,550 568,530 577,480 586,411 597,451 603,445 611,450 619,462 628,471 636,468 645,453 654,459 662,448 671,460 680,462 690,460 705,459 716,458 722,461 731,464 739,467 748,463 757,466 780,461 782,452 798,452 806,458 815,461 823,457 832,456 840,462 849,467 857,451 866,462 874,469 883,476 891,495 899,530 908,492 916,500 925,502 930,492 936,491 946,496 958,503 966,500 975,515 984,522 994,532 1002,515 1010,522 1020,532 1028,542 1035,547 1043,557 1052,564 1060,571 1069,590 1077,564 1086,575 1094,592 1102,582 1106,545 1111,496 1119,498 1128,533 1136,540 1146,538 1154,547', '#e00000', 1, '3 3');
line(price, '32,611 45,612 61,618 70,618 78,613 96,613 104,597 112,605 120,594 129,608 138,601 146,606 163,623 171,616 188,612 205,620 214,630 222,632 231,614 240,620 256,626 265,626 273,633 282,635 290,625 299,627 307,624 316,630 324,624 341,628 358,629 366,627 374,628 391,618 400,613 408,616 417,610 434,609 451,600 468,594 484,563 493,570 502,583 510,571 518,572 527,590 535,563 543,560 552,568 560,553 569,530 578,500 586,457 595,486 604,474 612,472 620,495 629,483 638,483 646,466 655,489 662,459 671,494 680,485 688,472 697,479 705,477 713,490 722,483 730,500 738,483 747,494 756,487 764,478 782,458 798,459 815,477 824,461 832,458 840,478 851,482 857,460 865,485 874,503 883,501 891,520 899,560 908,512 916,535 925,530 934,507 950,520 967,505 976,539 984,537 992,565 1001,527 1018,540 1027,550 1043,585 1052,567 1060,587 1069,602 1077,580 1095,611 1102,598 1111,534 1119,525 1128,548 1136,566 1145,569 1153,580', '#005000', 1, '3 3');

[[535, 561, 471], [561, 620, 421], [620, 781, 429], [781, 823, 441], [823, 858, 448], [858, 889, 449]].forEach(s => rect(price, s[0], s[2], s[1] - s[0], 1, '#0000ff'));
[[530, 459, 1, '#ff0000'], [579, 416, 2, '#009600'], [685, 426, 3, '#ff0000'], [787, 434, 4, '#ff0000'], [846, 445, 5, '#ff0000']].forEach(s => add(price, 'text', { x: s[0], y: s[1], fill: s[3] }, 'Semi-ciclo ' + s[2]));
markers(price, 388, 1000);

const priceScale = document.getElementById('price-scale');
rect(priceScale, 1251, 388, 1, 1000, '#000');
for (let c = 69; c <= 151; c++) {
  const y = Math.round(411 + (145 - c) * 3.33);
  const major = c % 5 === 0;
  rect(priceScale, 1252, y, major ? 8 : 3, 1, '#000');
  if (major && c >= 75 && c <= 145) add(priceScale, 'text', { x: 1298, y: y + 5 }, (c / 100).toFixed(2));
}
rect(priceScale, 1256, 562, 42, 16, '#000');
add(priceScale, 'text', { x: 1297, y: 574, class: 'last-price' }, '0.96900');

/* ---------- time axis ---------- */
const time = document.getElementById('time');
rect(time, 32, 668, 3000, 1, '#000');
rect(time, 32, 684, 3000, 1, '#000');
[[36, 8], [78, 15], [120, 22], [163, 29], [205, 5], [247, 12], [290, 19], [332, 26], [374, 3], [417, 10], [459, 17], [501, 24], [527, 31], [561, 7], [603, 14], [645, 21], [688, 28], [730, 4], [772, 11], [815, 18], [857, 25], [899, 4], [942, 11], [984, 18], [1026, 25], [1060, 2], [1094, 8], [1136, 15], [1179, 22], [1221, 29]].forEach(t => {
  rect(time, t[0], 668, 1, 16, '#000');
  add(time, 'text', { x: t[0] + 2, y: 681 }, t[1]);
});
[[188, 'November'], [374, 'December'], [535, '2013'], [722, 'February'], [891, 'March'], [1060, 'April'], [1238, 'May']].forEach(t => {
  rect(time, t[0], t[1] === '2013' ? 684 : 668, 1, 32, '#000');
  add(time, 'text', { x: t[0] + 2, y: 697 }, t[1]);
});
add(time, 'text', { x: 28, y: 697 }, 'er');

/* ---------- colour swatches ---------- */
const swatches = document.getElementById('swatches');
['#ffd700', '#40e0d0', '#a52a00', '#009600', '#32cd32', '#ffaa5a', '#ff6a20', '#ffffff', '#000000', '#00008b', '#7c9cc4', '#3b8f8f', '#7f7fc5', '#400040', '#ff0000', '#005000'].forEach(c => {
  const b = document.createElement('button');
  b.style.background = c;
  b.setAttribute('aria-label', 'Colour ' + c);
  if (c === '#ff0000') b.className = 'picked';
  swatches.appendChild(b);
});
```
